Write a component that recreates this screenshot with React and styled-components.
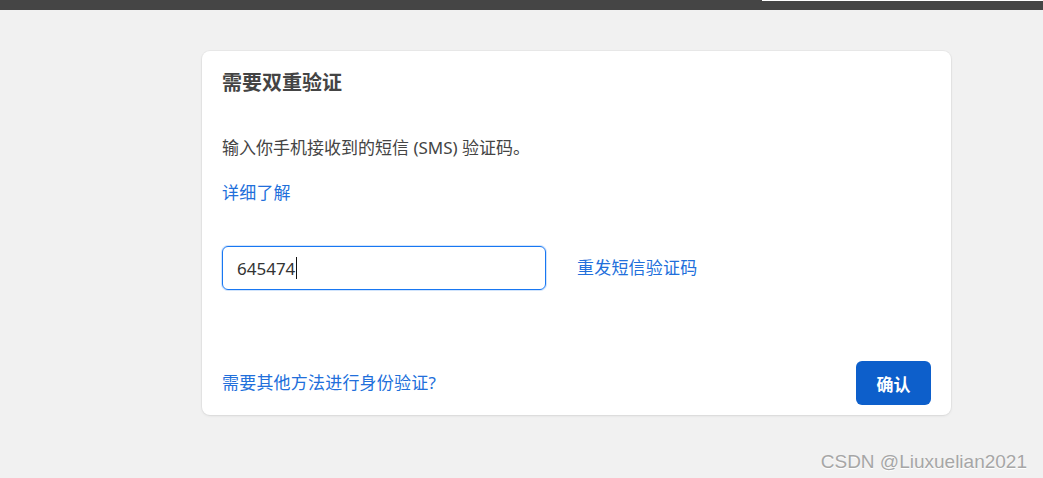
import React from 'react'
import styled, { createGlobalStyle } from 'styled-components'

const Global = createGlobalStyle`
  html, body { margin: 0; padding: 0; }
  body {
    background: #f1f1f1;
    font-family: "Segoe UI", "Noto Sans", "Noto Sans CJK SC", sans-serif;
    color: #444;
    height: 478px;
    overflow: hidden;
  }
`

const TopBar = styled.div`
  height: 10px;
  background: #454545;
  display: flex;
  justify-content: flex-end;
`
const TopSliver = styled.div`
  width: 281px;
  height: 1px;
  background: #fff;
`
const Page = styled.div`
  position: relative;
  height: 468px;
  box-sizing: border-box;
  padding: 41px 0 0 202px;
`
const Card = styled.div`
  width: 749px;
  height: 364px;
  box-sizing: border-box;
  background: #fff;
  border-radius: 8px;
  box-shadow: 0 0 0 1px rgba(0, 0, 0, 0.03), 0 1px 3px rgba(0, 0, 0, 0.08);
  padding: 20px 20px 10px 20px;
  display: flex;
  flex-direction: column;
`
const Title = styled.h2`
  margin: 0;
  font-size: 20px;
  line-height: 24px;
  font-weight: 700;
  color: #444;
`
const Text = styled.p`
  margin: 43px 0 0;
  font-size: 17px;
  line-height: 20px;
  color: #444;
`
const Link = styled.a`
  color: #216fdb;
  font-size: 17px;
  line-height: 20px;
  letter-spacing: 0.2px;
  text-decoration: none;
  cursor: pointer;
`
const LearnRow = styled.div`
  margin-top: 25px;
  display: flex;
`
const CodeRow = styled.div`
  margin-top: 43px;
  display: flex;
  align-items: center;
  gap: 31px;
`
const Input = styled.div`
  width: 324px;
  height: 44px;
  box-sizing: border-box;
  border: 1px solid #1877f2;
  border-radius: 6px;
  box-shadow: 0 0 0 1px rgba(24, 119, 242, 0.2);
  padding-left: 14px;
  display: flex;
  align-items: center;
  font-size: 17px;
  color: #333;
`
const Caret = styled.span`
  display: inline-block;
  width: 1px;
  height: 22px;
  background: #111;
  margin-left: 1px;
`
const Footer = styled.div`
  margin-top: auto;
  display: flex;
  align-items: center;
  justify-content: space-between;
`
const Button = styled.button`
  width: 75px;
  height: 44px;
  border: none;
  border-radius: 6px;
  background: #0d5fcb;
  color: #fff;
  font-family: inherit;
  font-size: 17px;
  font-weight: 700;
  cursor: pointer;
`
const Watermark = styled.div`
  position: absolute;
  right: 16px;
  bottom: 5px;
  font-family: "Liberation Sans", Arial, sans-serif;
  font-size: 19px;
  color: #a6a6a6;
  text-shadow: 0 1px 0 #fff;
`

export default function App() {
  return (
    <>
      <Global />
      <TopBar>
        <TopSliver />
      </TopBar>
      <Page>
        <Card>
          <Title>需要双重验证</Title>
          <Text>输入你手机接收到的短信 (SMS) 验证码。</Text>
          <LearnRow>
            <Link>详细了解</Link>
          </LearnRow>
          <CodeRow>
            <Input>
              645474<Caret />
            </Input>
            <Link>重发短信验证码</Link>
          </CodeRow>
          <Footer>
            <Link>需要其他方法进行身份验证?</Link>
            <Button>确认</Button>
          </Footer>
        </Card>
        <Watermark>CSDN @Liuxuelian2021</Watermark>
      </Page>
    </>
  )
}
